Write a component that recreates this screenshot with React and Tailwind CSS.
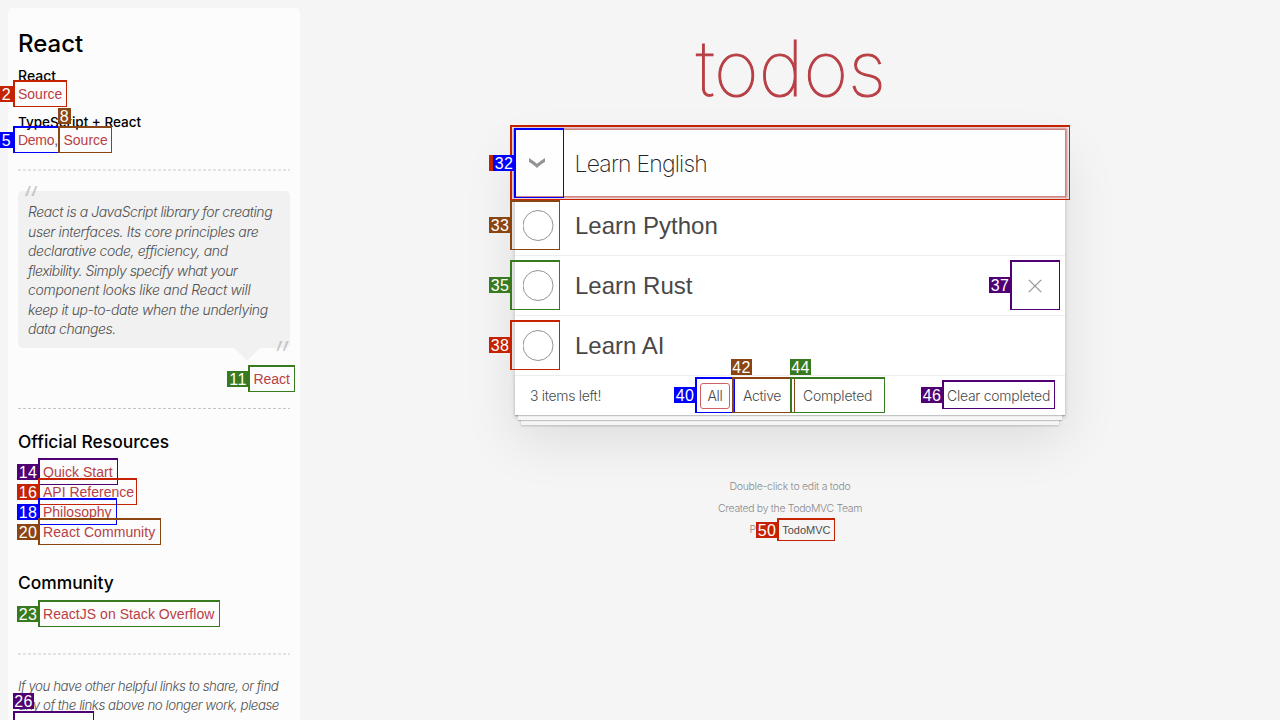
const HELV = "font-['Liberation_Sans',Arial,sans-serif]";

function Link({ children }) {
  return <a className={`${HELV} text-[14px] leading-5 text-[#b83f45]`}>{children}</a>;
}

function SoftRule({ className }) {
  return (
    <div
      className={`h-[2px] bg-[repeating-linear-gradient(90deg,#e3e3e3_0_3px,transparent_3px_5px)] ${className}`}
    />
  );
}

function SectionTitle({ children, className }) {
  return <h4 className={`text-[17.4px] leading-[22px] font-medium text-black ${className}`}>{children}</h4>;
}

const QUOTE = [
  ["React is a JavaScript library for creating", "tracking-[-0.42px]"],
  ["user interfaces. Its core principles are", "tracking-[-0.37px]"],
  ["declarative code, efficiency, and", "tracking-[-0.37px]"],
  ["flexibility. Simply specify what your", "tracking-[-0.52px]"],
  ["component looks like and React will", "tracking-[-0.3px]"],
  ["keep it up-to-date when the underlying", "tracking-[-0.39px]"],
  ["data changes.", "tracking-[-0.45px]"],
];

function Sidebar() {
  return (
    <aside className="mt-2 ml-2 h-[712px] w-[292px] shrink-0 overflow-hidden rounded-t-[5px] bg-[#fcfcfc] px-[10px] pt-[21px]">
      <h3 className="h-[29px] text-[24px] leading-[30px] font-medium text-black">React</h3>
      <h5 className="mt-[9px] h-[17px] text-[14px] leading-[18px] font-medium text-black">React</h5>
      <div className="flex h-5"><Link>Source</Link></div>
      <h5 className="mt-[9px] h-[17px] text-[13.5px] leading-[18px] font-medium text-black">TypeScript + React</h5>
      <div className={`flex h-5 leading-5 ${HELV} text-[14px] text-[#4d4d4d]`}>
        <span className="w-[45.5px] tracking-[-0.3px]"><Link>Demo</Link>,</span>
        <Link>Source</Link>
      </div>
      <SoftRule className="mt-[19px]" />

      <blockquote className="relative mt-5 h-[157px] rounded-[5px] bg-[#f1f1f1] pt-[11px] pl-[10px] text-[14px] leading-[19.5px] font-light text-[#505050] italic">
        {QUOTE.map(([line, tracking]) => (
          <p key={line} className={`whitespace-nowrap ${tracking}`}>{line}</p>
        ))}
        <span className="absolute -top-[14px] left-[2px] text-[42px] leading-[50px] font-extralight text-[#c4c4c4]">“</span>
        <span className="absolute right-[1px] -bottom-[34px] text-[42px] leading-[50px] font-extralight text-[#c4c4c4]">”</span>
        <svg className="absolute top-full right-[30px]" width="26" height="13" viewBox="0 0 26 13">
          <path d="M0 0H26L13 13Z" fill="#f1f1f1" />
        </svg>
      </blockquote>
      <div className="mt-[21px] flex h-5 justify-end"><Link>React</Link></div>
      <div className="mt-[19px] h-px bg-[repeating-linear-gradient(90deg,#c5c5c5_0_3px,transparent_3px_5px)]" />

      <SectionTitle className="mt-[22px]">Official Resources</SectionTitle>
      <ul className="mt-[9px] flex flex-col pl-[25px]">
        <li className="flex h-5 tracking-[0.04px]"><Link>Quick Start</Link></li>
        <li className="flex h-5"><Link>API Reference</Link></li>
        <li className="flex h-5"><Link>Philosophy</Link></li>
        <li className="flex h-5 tracking-[0.07px]"><Link>React Community</Link></li>
      </ul>
      <SectionTitle className="mt-[30px]">Community</SectionTitle>
      <div className="mt-[10px] flex h-5 pl-[25px] tracking-[0.04px]"><Link>ReactJS on Stack Overflow</Link></div>
      <SoftRule className="mt-[29px]" />
      <div className="mt-[22px] text-[13.3px] leading-[19px] font-light whitespace-nowrap text-[#505050] italic">
        <p className="tracking-[-0.47px]">If you have other helpful links to share, or find</p>
        <p className="tracking-[-0.45px]">any of the links above no longer work, please</p>
      </div>
    </aside>
  );
}

function TodoItem({ title, removable }) {
  return (
    <li className="flex h-[60px] items-center border-b border-[#ededed] pl-2">
      <svg className="shrink-0" width="31" height="31" viewBox="0 0 31 31">
        <circle cx="15" cy="15.5" r="15" fill="none" stroke="#949494" strokeWidth="1" />
      </svg>
      <label className={`ml-[21px] flex-1 text-[24px] leading-[29px] text-[#484848] ${HELV}`}>{title}</label>
      {removable && (
        <svg className="mr-[23px]" width="14" height="14" viewBox="0 0 14 14">
          <path d="M0.8 0.8L13.2 13.2M13.2 0.8L0.8 13.2" stroke="#949494" strokeWidth="1.2" fill="none" />
        </svg>
      )}
    </li>
  );
}

function TodoApp() {
  return (
    <section className="mt-[19px] h-[285px] w-[550px] bg-white shadow-[0_2px_4px_0_rgba(0,0,0,0.2),0_25px_50px_0_rgba(0,0,0,0.1)]">
      <div className="relative flex h-[66px] items-center bg-[#fefefe] shadow-[0_0_2px_2px_#cf7d7d]">
        <svg className="ml-[14px]" width="16" height="10" viewBox="0 0 16 10">
          <path d="M0 0C2.8 1.9 5.5 3.700 8 5.700C10.500 3.700 13.200 1.900 16 0V3.900C13 5.700 10.400 7.500 8 10C5.600 7.500 3 5.700 0 3.900Z" fill="#949494" />
        </svg>
        <span className="ml-[29.5px] pt-[2px] text-[23px] leading-[30px] font-extralight tracking-[-0.8px] text-[#222]">Learn English</span>
      </div>
      <ul>
        <TodoItem title="Learn Python" />
        <TodoItem title="Learn Rust" removable />
        <TodoItem title="Learn AI" />
      </ul>
      <footer className="flex h-[39px] items-center bg-white text-[14px] font-light text-[#4a4a4a] shadow-[0_1px_1px_rgba(0,0,0,0.2),0_8px_0_-3px_#f6f6f6,0_9px_1px_-3px_rgba(0,0,0,0.2),0_16px_0_-6px_#f6f6f6,0_17px_2px_-6px_rgba(0,0,0,0.2)]">
        <span className="w-[170px] pl-[15px] tracking-[-0.32px]">3 items left!</span>
        <div className="flex flex-1 items-center">
          <span className="ml-[15px] flex h-[26px] w-[30px] items-center justify-center rounded-[3px] border border-[#ce6068] tracking-[-0.3px]">All</span>
          <span className="ml-[13px] w-[60px] tracking-[-0.36px]">Active</span>
          <span className="tracking-[-0.2px]">Completed</span>
        </div>
        <span className="w-[118px] tracking-[-0.27px]">Clear completed</span>
      </footer>
    </section>
  );
}

const RED = ["border-[#c42200]", "bg-[#c42200]"];
const BLUE = ["border-[#0000ff]", "bg-[#0000ff]"];
const GREEN = ["border-[#387a20]", "bg-[#387a20]"];
const BROWN = ["border-[#8b4513]", "bg-[#8b4513]"];
const PURPLE = ["border-[#4f0073]", "bg-[#4f0073]"];

const MARKS = [
  ["2", RED, "left-[13px] top-[80px] h-[27px] w-[54px]", "left-0 top-[86px] w-[13px]"],
  ["5", BLUE, "left-[13px] top-[126px] h-[27px] w-[47px]", "left-0 top-[132px] w-[13px]"],
  ["8", BROWN, "left-[58px] top-[126px] h-[27px] w-[54px]", "left-[58px] top-[108px] w-[13px]"],
  ["11", GREEN, "left-[248px] top-[365px] h-[27px] w-[47px]", "left-[227px] top-[371px] w-[22px]"],
  ["14", PURPLE, "left-[38px] top-[458px] h-[27px] w-[80px]", "left-[17px] top-[464px] w-[22px]"],
  ["16", RED, "left-[38px] top-[478px] h-[27px] w-[99px]", "left-[17px] top-[484px] w-[22px]"],
  ["18", BLUE, "left-[38px] top-[498px] h-[27px] w-[79px]", "left-[17px] top-[504px] w-[22px]"],
  ["20", BROWN, "left-[38px] top-[518px] h-[27px] w-[123px]", "left-[17px] top-[524px] w-[22px]"],
  ["23", GREEN, "left-[38px] top-[600px] h-[27px] w-[182px]", "left-[17px] top-[606px] w-[22px]"],
  ["26", PURPLE, "left-[13px] top-[711px] h-[27px] w-[81px]", "left-[13px] top-[693px] w-[21px]"],
  ["", RED, "left-[510px] top-[125px] h-[75px] w-[560px]", "left-[489px] top-[155px] w-[21px]"],
  ["32", BLUE, "left-[514px] top-[128px] h-[70px] w-[50px]", "left-[493px] top-[155px] w-[22px]"],
  ["33", BROWN, "left-[510px] top-[200px] h-[50px] w-[50px]", "left-[489px] top-[217px] w-[22px]"],
  ["35", GREEN, "left-[510px] top-[260px] h-[50px] w-[50px]", "left-[489px] top-[277px] w-[22px]"],
  ["37", PURPLE, "left-[1010px] top-[260px] h-[50px] w-[50px]", "left-[989px] top-[277px] w-[22px]"],
  ["38", RED, "left-[510px] top-[320px] h-[50px] w-[50px]", "left-[489px] top-[337px] w-[22px]"],
  ["40", BLUE, "left-[695px] top-[377px] h-[36px] w-[40px]", "left-[674px] top-[387px] w-[22px]"],
  ["42", BROWN, "left-[732px] top-[377px] h-[36px] w-[63px]", "left-[731px] top-[359px] w-[21px]"],
  ["44", GREEN, "left-[790px] top-[377px] h-[36px] w-[95px]", "left-[790px] top-[359px] w-[21px]"],
  ["46", PURPLE, "left-[942px] top-[380px] h-[29px] w-[113px]", "left-[921px] top-[387px] w-[22px]"],
  ["50", RED, "left-[777px] top-[518px] h-[23px] w-[58px]", "left-[756px] top-[522px] w-[22px]"],
];

function Mark({ id, color, box, tag }) {
  return (
    <>
      <div className={`absolute border-t-2 border-r border-b border-l-2 ${color[0]} ${box}`} />
      <div className={`absolute flex h-4 justify-center text-[16px] leading-[17px] tracking-[0.4px] text-white ${HELV} ${color[1]} ${tag}`}>{id}</div>
    </>
  );
}

export default function App() {
  return (
    <div className="relative flex h-[720px] w-[1280px] overflow-hidden bg-[#f5f5f5] font-['Inter',sans-serif]">
      <Sidebar />
      <main className="flex flex-1 flex-col items-center">
        <h1 className="mt-[22px] h-[89px] pl-[2px] text-[77px] leading-[93px] font-thin text-[#b83f45] [-webkit-text-stroke:1.1px_#b83f45]">todos</h1>
        <TodoApp />
        <footer className="mt-[61px] flex flex-col items-center text-[10.5px] leading-[22px] font-light text-[#8a8a8a]">
          <p className="tracking-[-0.27px]">Double-click to edit a todo</p>
          <p className="tracking-[-0.34px]">Created by the TodoMVC Team</p>
          <p className="-mt-px flex w-[81px] justify-between">
            <span>P</span>
            <a className={`text-[11px] font-normal text-[#4d4d4d] ${HELV}`}>TodoMVC</a>
          </p>
        </footer>
      </main>
      {MARKS.map(([id, color, box, tag]) => (
        <Mark key={box} id={id} color={color} box={box} tag={tag} />
      ))}
    </div>
  );
}
